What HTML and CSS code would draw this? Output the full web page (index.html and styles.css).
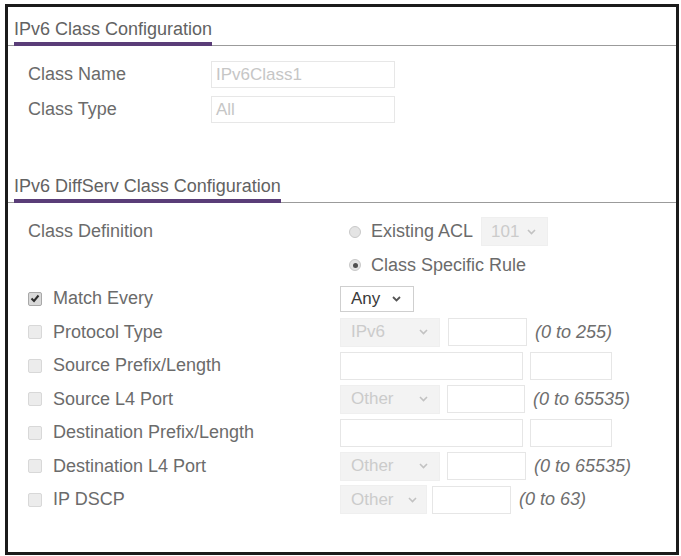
FILE: index.html
```html
<!DOCTYPE html>
<html>
<head>
<meta charset="utf-8">
<link rel="stylesheet" href="styles.css">
</head>
<body>
<div class="frame">
  <div class="section-head"><span>IPv6 Class Configuration</span></div>
  <div class="info">
    <div class="info-row"><span class="info-lbl">Class Name</span><span class="field">IPv6Class1</span></div>
    <div class="info-row"><span class="info-lbl">Class Type</span><span class="field">All</span></div>
  </div>
  <div class="section-head second"><span>IPv6 DiffServ Class Configuration</span></div>
  <div class="rules">
    <div class="lbl">Class Definition</div>
    <div class="ctl">
      <span class="radio"></span><span class="rtext">Existing ACL</span>
      <span class="sel dis w-acl">101<svg class="chev" width="9" height="6" viewBox="0 0 9 6"><polyline points="1,1 4.5,4.5 8,1"/></svg></span>
    </div>

    <div class="lbl"></div>
    <div class="ctl">
      <span class="radio on"></span><span class="rtext">Class Specific Rule</span>
    </div>

    <div class="lbl"><span class="cb on"><svg width="10" height="9" viewBox="0 0 10 9"><polyline points="1.5,4.5 4,7 8.5,1.5"/></svg></span>Match Every</div>
    <div class="ctl">
      <span class="sel any">Any<svg class="chev" width="9" height="6" viewBox="0 0 9 6"><polyline points="1,1 4.5,4.5 8,1"/></svg></span>
    </div>

    <div class="lbl"><span class="cb"></span>Protocol Type</div>
    <div class="ctl">
      <span class="sel dis w-100">IPv6<svg class="chev" width="9" height="6" viewBox="0 0 9 6"><polyline points="1,1 4.5,4.5 8,1"/></svg></span>
      <span class="inp w-79 gap8"></span>
      <span class="hint">(0 to 255)</span>
    </div>

    <div class="lbl"><span class="cb"></span>Source Prefix/Length</div>
    <div class="ctl">
      <span class="inp w-183"></span>
      <span class="inp w-82"></span>
    </div>

    <div class="lbl"><span class="cb"></span>Source L4 Port</div>
    <div class="ctl">
      <span class="sel dis w-100">Other<svg class="chev" width="9" height="6" viewBox="0 0 9 6"><polyline points="1,1 4.5,4.5 8,1"/></svg></span>
      <span class="inp w-78"></span>
      <span class="hint">(0 to 65535)</span>
    </div>

    <div class="lbl"><span class="cb"></span>Destination Prefix/Length</div>
    <div class="ctl">
      <span class="inp w-183"></span>
      <span class="inp w-82"></span>
    </div>

    <div class="lbl"><span class="cb"></span>Destination L4 Port</div>
    <div class="ctl">
      <span class="sel dis w-100">Other<svg class="chev" width="9" height="6" viewBox="0 0 9 6"><polyline points="1,1 4.5,4.5 8,1"/></svg></span>
      <span class="inp w-79"></span>
      <span class="hint">(0 to 65535)</span>
    </div>

    <div class="lbl"><span class="cb"></span>IP DSCP</div>
    <div class="ctl">
      <span class="sel dis w-87">Other<svg class="chev" width="9" height="6" viewBox="0 0 9 6"><polyline points="1,1 4.5,4.5 8,1"/></svg></span>
      <span class="inp w-79 gap5"></span>
      <span class="hint">(0 to 63)</span>
    </div>
  </div>
</div>
</body>
</html>
```
FILE: styles.css
```css
* { box-sizing: border-box; }
body {
  margin: 0;
  background: #fff;
  font-family: "Liberation Sans", Arial, sans-serif;
  color: #6b6b6b;
}
.frame {
  margin: 4px 0 0 5px;
  width: 674px;
  height: 551px;
  border: 3px solid #1b1b1b;
}
.section-head {
  display: flex;
  border-bottom: 1px solid #9b9b9b;
  padding: 11px 0 0 6px;
}
.section-head span {
  font-size: 18px;
  line-height: 22px;
  color: #626262;
  padding-bottom: 2px;
  border-bottom: 4px solid #5a3d78;
  margin-bottom: -1px;
}
.section-head.second { padding-top: 52px; }

.info {
  display: flex;
  flex-direction: column;
  gap: 8px;
  padding: 15px 0 0 20px;
}
.info-row {
  display: flex;
  align-items: center;
  height: 27px;
}
.info-lbl {
  width: 183px;
  font-size: 18px;
}
.field {
  width: 184px;
  height: 27px;
  border: 1px solid #e7e7e7;
  display: flex;
  align-items: center;
  padding-left: 4px;
  font-size: 17px;
  color: #c6c6c6;
}

.rules {
  display: grid;
  grid-template-columns: 312px auto;
  grid-template-rows: 33px 34px repeat(7, 33.5px);
  align-items: center;
  padding: 12px 0 0 20px;
}
.lbl {
  display: flex;
  align-items: center;
  font-size: 18px;
}
.ctl {
  display: flex;
  align-items: center;
  gap: 7px;
}
.radio {
  width: 12px;
  height: 12px;
  border-radius: 50%;
  background: #e4e4e4;
  border: 1px solid #c9c9c9;
  margin-left: 9px;
  display: flex;
  align-items: center;
  justify-content: center;
}
.radio.on::after {
  content: "";
  width: 5px;
  height: 5px;
  border-radius: 50%;
  background: #505050;
}
.rtext {
  font-size: 18px;
  margin-left: 3px;
}
.cb {
  width: 14px;
  height: 14px;
  border: 1px solid #d8d8d8;
  background: #ececec;
  border-radius: 2px;
  margin-right: 11px;
  display: flex;
  align-items: center;
  justify-content: center;
}
.cb.on {
  background: #d9d9d9;
  border-color: #a8a8a8;
}
.cb svg polyline {
  fill: none;
  stroke: #2d2d2d;
  stroke-width: 2;
}
.sel {
  display: flex;
  align-items: center;
  height: 29px;
  padding: 0 11px 0 10px;
  font-size: 17px;
  border: 1px solid #efefef;
}
.sel .chev { margin-left: auto; }
.sel .chev polyline {
  fill: none;
  stroke: #c2c2c2;
  stroke-width: 1.6;
}
.sel.dis {
  background: #f3f3f3;
  color: #cbcbcb;
}
.sel.any {
  width: 74px;
  height: 26px;
  background: #fff;
  border-color: #cfcfcf;
  color: #3a3a3a;
  padding: 0 12px 0 10px;
}
.sel.any .chev polyline { stroke: #555; stroke-width: 1.8; }
.w-acl { width: 67px; margin-left: 1px; padding-left: 9px; }
.w-100 { width: 100px; }
.w-87 { width: 87px; padding-right: 9px; }
.inp {
  height: 28px;
  border: 1px solid #e6e6e6;
  background: #fff;
}
.w-79 { width: 79px; }
.w-78 { width: 78px; }
.w-82 { width: 82px; }
.w-183 { width: 183px; }
.gap8 { margin-left: 1px; }
.gap5 { margin-left: -2px; }
.hint {
  font-style: italic;
  font-size: 18px;
  color: #6e6e6e;
  margin-left: 1px;
}
```
